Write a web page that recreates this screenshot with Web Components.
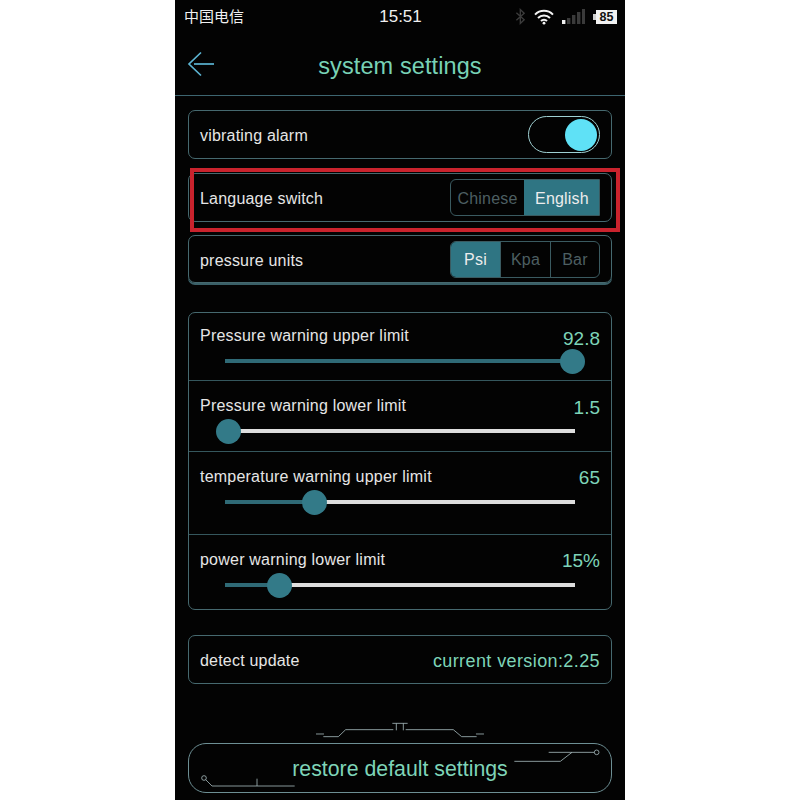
<!DOCTYPE html>
<html>
<head>
<meta charset="utf-8">
<title>system settings</title>
<style>
  html, body { margin: 0; background: #fff; height: 800px; overflow: hidden; }
  body { display: flex; justify-content: center; font-family: "Liberation Sans", "Noto Sans CJK SC", sans-serif; }
</style>
</head>
<body>
<phone-screen>
  <status-bar></status-bar>
  <app-header>system settings</app-header>

  <setting-card style="height:47px;margin-top:14px">
    vibrating alarm
    <toggle-switch slot="end"></toggle-switch>
  </setting-card>

  <setting-card style="height:47px;margin-top:14px">
    Language switch
    <seg-control slot="end" options="Chinese:73,English:75" active="1" square></seg-control>
  </setting-card>

  <setting-card style="height:46px;margin-top:13px" underlined>
    pressure units
    <seg-control slot="end" options="Psi:49,Kpa:50,Bar:49" active="0"></seg-control>
  </setting-card>

  <card-group style="margin-top:29px">
    <slider-row label="Pressure warning upper limit" value="92.8" thumb="347" h="68" label-top="14" value-top="15" track-top="48"></slider-row>
    <slider-row label="Pressure warning lower limit" value="1.5" thumb="3" h="71" label-top="16" value-top="16" track-top="50"></slider-row>
    <slider-row label="temperature warning upper limit" value="65" thumb="89" h="83" label-top="16" value-top="15" track-top="50"></slider-row>
    <slider-row label="power warning lower limit" value="15%" thumb="54" h="74" label-top="16" value-top="15" track-top="50" last></slider-row>
  </card-group>

  <setting-card style="height:47px;margin-top:25px">
    detect update
    <span slot="end" style="color:#7ed4b8;font-size:18px;letter-spacing:.4px;padding-top:3px">current version:2.25</span>
  </setting-card>

  <restore-button>restore default settings</restore-button>

  <red-highlight></red-highlight>
</phone-screen>

<script>
class PhoneScreen extends HTMLElement {
  constructor() {
    super();
    this.attachShadow({ mode: 'open' }).innerHTML = `
      <style>
        :host {
          display: flex; flex-direction: column; position: relative;
          width: 450px; height: 800px; box-sizing: border-box;
          background: #030303; color: #e6e6e6; overflow: hidden;
          font-family: "Liberation Sans", "Noto Sans CJK SC", sans-serif;
        }
      </style>
      <slot></slot>`;
  }
}

class StatusBar extends HTMLElement {
  constructor() {
    super();
    this.attachShadow({ mode: 'open' }).innerHTML = `
      <style>
        :host {
          display: grid; grid-template-columns: 1fr auto 1fr; align-items: center;
          height: 33px; padding: 0 8px 0 9px; color: #f0f0f0;
        }
        .carrier { font: 15px "Noto Sans CJK SC", "Liberation Sans", sans-serif; margin-top: -2px; }
        .time { font-size: 17px; margin-top: 1px; }
        .icons { display: flex; justify-content: flex-end; align-items: center; }
        svg { display: block; }
        .batt {
          position: relative; width: 21px; height: 14px; margin-left: 11px; background: #f2f2f2;
          color: #111; font: bold 12.5px/14px "Liberation Sans", sans-serif; text-align: center;
        }
        .batt::before {
          content: ""; position: absolute; left: -3px; top: 4px; width: 3px; height: 6px; background: #cfcfcf;
        }
      </style>
      <span class="carrier">中国电信</span>
      <span class="time">15:51</span>
      <span class="icons">
        <svg width="11" height="17" viewBox="0 0 12 17" fill="none" stroke="#3c3c3c" stroke-width="1.5">
          <path d="M1.5 4.5 10 12l-4.2 4V1L10 5 1.5 12.5"/>
        </svg>
        <svg style="margin-left:8px" width="20" height="16" viewBox="0 0 20 16" fill="none" stroke="#f4f4f4" stroke-width="2">
          <path d="M1 5.6a12.6 12.6 0 0 1 18 0"/>
          <path d="M4 9a8.4 8.4 0 0 1 12 0"/>
          <path d="M7 12a4.2 4.2 0 0 1 6 0"/>
          <circle cx="10" cy="14.2" r="1.4" fill="#f4f4f4" stroke="none"/>
        </svg>
        <svg style="margin-left:8px" width="23" height="16" viewBox="0 0 23 16">
          <rect x="0" y="11" width="3.4" height="4" fill="#f0f0f0"/>
          <rect x="5" y="9" width="3.4" height="6" fill="#3a3a3a"/>
          <rect x="10" y="6" width="3.4" height="9" fill="#3a3a3a"/>
          <rect x="15" y="3" width="3.4" height="12" fill="#3a3a3a"/>
          <rect x="20" y="0" width="3" height="15" fill="#3a3a3a"/>
        </svg>
        <span class="batt">85</span>
      </span>`;
  }
}

class AppHeader extends HTMLElement {
  constructor() {
    super();
    this.attachShadow({ mode: 'open' }).innerHTML = `
      <style>
        :host {
          display: flex; align-items: center; justify-content: center; position: relative;
          height: 63px; box-sizing: border-box; padding-top: 4px; border-bottom: 1px solid #3d6570;
          color: #78d2b6; font-size: 23.5px; letter-spacing: .1px;
        }
        svg { position: absolute; left: 12px; top: 18px; }
      </style>
      <svg width="28" height="26" viewBox="0 0 28 26" fill="none" stroke="#5cb4d2" stroke-width="1.7">
        <path d="M14 1.5 2 13l12 11.5"/><path d="M7 13h20"/>
      </svg>
      <slot></slot>`;
  }
}

class SettingCard extends HTMLElement {
  constructor() {
    super();
    this.attachShadow({ mode: 'open' }).innerHTML = `
      <style>
        :host {
          display: flex; align-items: center; justify-content: space-between; flex: none;
          margin: 0 13px; padding: 0 11px; box-sizing: content-box;
          border: 1px solid #46696f; border-radius: 7px; font-size: 16px; letter-spacing: .2px; color: #e6e6e6;
        }
        :host([underlined]) { box-shadow: 0 2px 0 0 #3a6068; }
        span { display: block; padding-top: 3px; }
      </style>
      <span><slot></slot></span>
      <slot name="end"></slot>`;
  }
}

class ToggleSwitch extends HTMLElement {
  constructor() {
    super();
    this.attachShadow({ mode: 'open' }).innerHTML = `
      <style>
        :host {
          display: flex; justify-content: flex-end; align-items: center;
          width: 72px; height: 37px; box-sizing: border-box; padding-right: 2px;
          border: 1.5px solid #9fd0d2; border-radius: 19px;
        }
        i { display: block; width: 32px; height: 32px; border-radius: 50%; background: #5fe1f6; }
      </style>
      <i></i>`;
  }
}

class SegControl extends HTMLElement {
  connectedCallback() {
    const active = +this.getAttribute('active');
    const opts = this.getAttribute('options').split(',').map(o => o.split(':'));
    this.attachShadow({ mode: 'open' }).innerHTML = `
      <style>
        :host {
          display: flex; height: 37px; box-sizing: border-box;
          border: 1px solid #3a5a60; border-radius: 6px; overflow: hidden;
          font-size: 16px; letter-spacing: .2px;
        }
        :host([square]) { border-radius: 6px 0 0 6px; }
        span { display: flex; align-items: center; justify-content: center; padding-top: 2px; color: #4d5f62; box-sizing: border-box; }
        span + span { border-left: 1px solid #3a5a60; }
        .on { background: #2f7583; color: #ededed; border-color: #2f7583; }
      </style>
      ${opts.map((o, i) => `<span class="${i === active ? 'on' : ''}" style="width:${o[1]}px">${o[0]}</span>`).join('')}`;
  }
}

class CardGroup extends HTMLElement {
  constructor() {
    super();
    this.attachShadow({ mode: 'open' }).innerHTML = `
      <style>
        :host {
          display: flex; flex-direction: column; flex: none; margin: 0 13px;
          border: 1px solid #46696f; border-radius: 7px;
        }
      </style>
      <slot></slot>`;
  }
}

class SliderRow extends HTMLElement {
  connectedCallback() {
    const a = n => this.getAttribute(n);
    const thumb = +a('thumb');
    this.attachShadow({ mode: 'open' }).innerHTML = `
      <style>
        :host {
          display: block; position: relative; box-sizing: border-box; height: ${a('h')}px;
          padding: 0 11px; border-bottom: 1px solid #35575d; font-size: 16px;
        }
        :host([last]) { border-bottom: 0; }
        .top { display: flex; justify-content: space-between; align-items: flex-start; height: ${+a('track-top') - 2}px; }
        .label { margin-top: ${a('label-top')}px; color: #e6e6e6; letter-spacing: .22px; }
        .value { margin-top: ${a('value-top')}px; color: #7ed4b8; font-size: 19px; }
        .track { position: relative; display: flex; height: 4px; margin: 0 25px; background: #dedede; }
        .fill { width: ${thumb}px; background: #2f6a76; }
        .thumb {
          position: absolute; left: ${thumb}px; top: 50%; width: 25px; height: 25px; margin: -12.5px 0 0 -12.5px;
          border-radius: 50%; background: #337a88;
        }
      </style>
      <div class="top"><span class="label">${a('label')}</span><span class="value">${a('value')}</span></div>
      <div class="track"><div class="fill"></div><div class="thumb"></div></div>`;
  }
}

class RestoreButton extends HTMLElement {
  constructor() {
    super();
    this.attachShadow({ mode: 'open' }).innerHTML = `
      <style>
        :host { display: block; flex: none; margin-top: 38px; }
        .orn { display: block; margin: 0 auto 5px; }
        .btn {
          position: relative; display: flex; align-items: center; justify-content: center;
          height: 48px; box-sizing: content-box; margin: 0 13px; border: 1px solid #6d8f94; border-radius: 18px;
          color: #7ed4b8; font-size: 21.3px; line-height: 1; 
        }
        .label { padding-top: 3px; }
        .btn svg { position: absolute; left: 0; top: 0; }
      </style>
      <svg class="orn" width="168.3" height="16" viewBox="423 290 505 48" fill="none" stroke="#a9bec0" stroke-width="2.4">
        <path d="M423 326h24M445 334h45l22-21h143M692 313h143l25 21h45M903 326h24"/>
        <path d="M652 294h46M664 294v21M685 294v21"/>
      </svg>
      <div class="btn">
        <svg width="424" height="49" viewBox="41 356 1272 147" fill="none" stroke="#a9bec0" stroke-width="2.4">
          <circle cx="86" cy="458" r="7"/><path d="M91 463l19 19h248M245 460v22"/>
          <circle cx="1264" cy="381" r="7"/><path d="M1120 381h137M1190 381l-35 27h-138"/>
        </svg>
        <span class="label"><slot></slot></span>
      </div>`;
  }
}

class RedHighlight extends HTMLElement {
  constructor() {
    super();
    // annotation drawn on top of the screenshot
    this.attachShadow({ mode: 'open' }).innerHTML = `
      <style>
        :host {
          position: absolute; left: 15px; top: 168px; width: 430px; height: 64px; box-sizing: border-box;
          border: 4px solid #c9232d;
        }
      </style>`;
  }
}

customElements.define('phone-screen', PhoneScreen);
customElements.define('status-bar', StatusBar);
customElements.define('app-header', AppHeader);
customElements.define('setting-card', SettingCard);
customElements.define('toggle-switch', ToggleSwitch);
customElements.define('seg-control', SegControl);
customElements.define('card-group', CardGroup);
customElements.define('slider-row', SliderRow);
customElements.define('restore-button', RestoreButton);
customElements.define('red-highlight', RedHighlight);
</script>
</body>
</html>
